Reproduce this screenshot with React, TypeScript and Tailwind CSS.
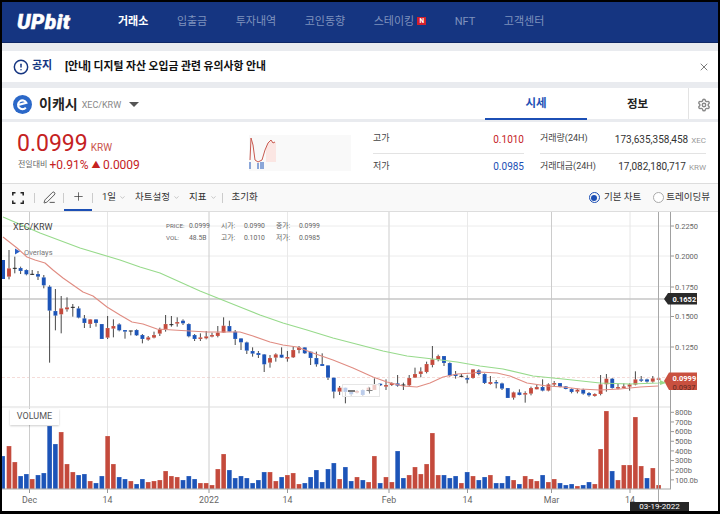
import { ChevronDown, CircleAlert, PenLine, Plus, Settings, X } from 'lucide-react'

const BLUE = '#1c54b8'
const RED = '#c44a3c'

type Candle = ['b' | 'r' | 'd', number, number, number, number]

// body top, body bottom, wick top, wick bottom, read off 3x crops (y = base + v / 3)
const candlesA: Candle[] = [
  ['r', 25, 50, -30, 58], ['d', 25, 25, -10, 40], ['b', 24, 33, 20, 42], ['b', 30, 43, 28, 46], ['d', 43, 43, 30, 45],
  ['b', 42, 50, 33, 60], ['b', 52, 76, 45, 85], ['b', 80, 152, 76, 308], ['b', 153, 167, 87, 211], ['r', 145, 163, 108, 220],
  ['r', 142, 148, 112, 155], ['d', 142, 142, 132, 170], ['b', 145, 173, 139, 175], ['b', 175, 189, 165, 204], ['r', 178, 192, 178, 204],
  ['b', 178, 189, 178, 200], ['b', 192, 237, 192, 237], ['r', 204, 233, 168, 237], ['r', 198, 206, 178, 232], ['b', 193, 211, 190, 214],
  ['b', 210, 215, 210, 236], ['d', 213, 213, 212, 226], ['b', 210, 226, 208, 228], ['b', 225, 237, 222, 250], ['r', 232, 239, 228, 242],
  ['r', 225, 233, 215, 235], ['r', 208, 221, 203, 228], ['r', 192, 207, 165, 215], ['d', 194, 194, 168, 200], ['r', 186, 191, 172, 200],
  ['b', 182, 190, 178, 195], ['b', 192, 229, 190, 232], ['b', 225, 237, 222, 243], ['r', 232, 237, 220, 243], ['r', 229, 235, 213, 238],
  ['r', 225, 230, 218, 232], ['r', 218, 228, 198, 232], ['r', 197, 218, 172, 218], ['b', 198, 215, 182, 215], ['b', 215, 237, 210, 255],
]
const candlesB: Candle[] = [
  ['b', 145, 157, 145, 180], ['b', 157, 182, 155, 192], ['b', 183, 191, 172, 200], ['b', 189, 195, 183, 204], ['b', 193, 223, 192, 246],
  ['r', 204, 218, 195, 233], ['r', 193, 203, 190, 215], ['b', 194, 203, 172, 204], ['r', 201, 206, 183, 215], ['r', 180, 202, 170, 204],
  ['r', 172, 180, 168, 190], ['b', 172, 190, 172, 192], ['b', 185, 204, 185, 225], ['b', 204, 223, 185, 230], ['b', 222, 228, 190, 228],
  ['b', 226, 263, 226, 270], ['b', 263, 305, 263, 325], ['r', 293, 305, 288, 315], ['b', 293, 306, 293, 340], ['b', 300, 313, 300, 318],
  ['r', 303, 308, 300, 310], ['b', 300, 315, 298, 318], ['r', 293, 300, 290, 305], ['r', 283, 300, 265, 300], ['b', 281, 286, 281, 288],
  ['r', 285, 290, 268, 300], ['r', 279, 285, 277, 288], ['b', 280, 287, 255, 290], ['d', 285, 285, 278, 300], ['r', 264, 286, 255, 290],
  ['r', 252, 263, 233, 264], ['r', 244, 252, 232, 262], ['r', 222, 246, 215, 250], ['r', 208, 225, 168, 232], ['r', 198, 208, 194, 214],
  ['b', 198, 219, 198, 228], ['b', 219, 257, 217, 260], ['b', 252, 258, 243, 266], ['d', 259, 259, 252, 262], ['b', 264, 269, 256, 280],
  ['r', 238, 264, 238, 266], ['b', 241, 252, 238, 256],
  ['b', 252, 279, 250, 282], ['r', 276, 282, 258, 284], ['b', 276, 280, 270, 295], ['b', 280, 296, 278, 300], ['b', 294, 324, 294, 324],
  ['r', 307, 323, 305, 329], ['b', 307, 315, 298, 316], ['r', 309, 314, 304, 338], ['r', 294, 311, 290, 316], ['r', 291, 298, 284, 298],
  ['b', 291, 302, 268, 304], ['r', 283, 302, 280, 304], ['r', 279, 284, 273, 290], ['b', 279, 291, 279, 292], ['b', 289, 297, 288, 298],
  ['b', 297, 306, 295, 310], ['r', 299, 305, 296, 310], ['b', 299, 311, 296, 314], ['b', 309, 316, 306, 320], ['r', 312, 318, 310, 320],
  ['r', 283, 312, 255, 316], ['r', 266, 283, 252, 305], ['b', 266, 294, 264, 296], ['r', 291, 296, 282, 298], ['r', 289, 294, 280, 295],
  ['r', 283, 290, 280, 302], ['r', 268, 284, 244, 286], ['b', 268, 272, 258, 276], ['b', 268, 275, 266, 278], ['r', 265, 275, 258, 278],
  ['r', 265, 269, 263, 272],
]

const candles = [
  ...candlesA.map((c) => ({ c, base: 260 })),
  ...candlesB.map((c) => ({ c, base: 290 })),
]

// k = -1 first, height in px, + is red and - is blue
const volumes = [
  -33, 43, 27, -13, -15, 10, -14, -16, -63, -45, 57, 25, 17, -14, -15, 8, -6, -13, 53, 25, -12, -10, 8, -5, -10, 7, 8, 9, 18, 13, 12,
  -9, -13, -10, 6, 6, 4, 20, 35, -19, -11,
  -13, -11, -6, -9, -17, 17, 8, -12, 14, 16, 5, -6, -12, -19, -7, -20, -26, 10, -22, -8, 12, -9, 7, 33, -6, 12, 7, -38, -11, 14, 22,
  15, 25, 56, 14, -14, -11, -13, 6, -17, 13, -9,
  -12, 14, -6, -6, -13, 9, -5, 13, 10, 8, -14, 7, 10, -6, -4, -5, 3, -4, -7, 5, 40, 78, -18, 9, 24, 24, 72, 23, -11, 21, 4,
]

const redLine = '3,237 17,248 27,257 35,260 45,263 53,270 63,278 73,285 83,292 93,296 107,307 120,315 132,322 143,324 157,329 173,330 190,331 207,332 227,332 240,332 253,336 270,342 283,345 297,347 313,353 333,360 353,368 373,377 387,382 403,386 417,387 430,383 443,377 457,374 473,373 480,372 497,373 510,376 527,383 547,386 563,387 580,389 600,390 620,389 640,387 658,386'
const greenLine = '3,217 40,233 80,248 120,260 140,267 160,273 180,282 200,291 220,299 240,307 260,315 283,323 307,330 333,338 360,345 383,351 407,356 433,359 457,362 480,366 503,369 533,376 563,379 600,383 630,384 658,383 667,382'

const xOf = (k: number) => 9 + 5.8 * k

const vGrid = [
  { x: 29.5, c: '#cccccc', w: 1 },
  { x: 107.5, c: '#e6e6e6', w: 1 },
  { x: 209, c: '#cccccc', w: 1 },
  { x: 287.5, c: '#e9e9e9', w: 1 },
  { x: 389, c: '#dedede', w: 1.5 },
  { x: 467.5, c: '#e9e9e9', w: 1 },
  { x: 551.5, c: '#cccccc', w: 1 },
  { x: 630, c: '#e6e6e6', w: 1 },
]
const hGrid = [226, 256, 286.5, 317, 347, 377.5]
const priceLabels = [
  ['0.2250', 226],
  ['0.2000', 256],
  ['0.1750', 287],
  ['0.1500', 316.5],
  ['0.1250', 347],
] as const
const volLabels = ['800b', '700b', '600b', '500b', '400b', '300b', '200b', '100.0b']
const dates = [
  ['Dec', 29.5],
  ['14', 107.5],
  ['2022', 209],
  ['14', 287.5],
  ['Feb', 389],
  ['14', 467.5],
  ['Mar', 551.5],
  ['14', 630],
] as const
const info = [
  ['PRICE:', 166, 225],
  ['0.0999', 189, 225],
  ['시가:', 221, 225],
  ['0.0990', 244, 225],
  ['종가:', 276, 225],
  ['0.0999', 299, 225],
  ['VOL:', 166, 237],
  ['48.5B', 189, 237],
  ['고가:', 221, 237],
  ['0.1010', 244, 237],
  ['저가:', 276, 237],
  ['0.0985', 299, 237],
] as const

const navItems = ['입출금', '투자내역', '코인동향']

function Chart() {
  return (
    <svg viewBox="2 212 716 299" className="absolute inset-0 w-full h-full">
      {hGrid.map((y) => (
        <line key={y} x1={2} x2={670} y1={y} y2={y} stroke={y === 377.5 ? '#f5dcd9' : '#ececec'} strokeDasharray={y === 377.5 ? '3 2' : undefined} />
      ))}
      {vGrid.map((g) => (
        <line key={g.x} x1={g.x} x2={g.x} y1={212} y2={489} stroke={g.c} strokeWidth={g.w} />
      ))}
      <line x1={2} x2={666} y1={299} y2={299} stroke="#c6c6c6" strokeWidth={1.5} />
      <line x1={2} x2={671} y1={407} y2={407} stroke="#dddddd" />

      {volumes.map((v, i) => (
        <rect
          key={i}
          x={Math.max(xOf(i - 1) - 2.4, 2)}
          y={489 - Math.abs(v)}
          width={xOf(i - 1) - 2.4 < 2 ? 3 : 4.8}
          height={Math.abs(v)}
          fill={v > 0 ? RED : BLUE}
          stroke="#ffffff"
          strokeOpacity={0.35}
          strokeWidth={0.6}
        />
      ))}

      <rect x={2} y={260} width={3} height={19} fill={BLUE} />
      {candles.map(({ c, base }, k) => {
        const [kind, top, bot, wt, wb] = c
        const x = xOf(k)
        const y = (v: number) => base + v / 3
        return (
          <g key={k}>
            <line x1={x} x2={x} y1={y(wt)} y2={y(wb)} stroke="#333333" strokeWidth={0.9} />
            {kind === 'd' ? (
              <line x1={x - 2} x2={x + 2} y1={y(top)} y2={y(top)} stroke="#222222" />
            ) : (
              <rect
                x={x - 2}
                y={y(top)}
                width={4}
                height={Math.max(y(bot) - y(top), 1.5)}
                fill={kind === 'r' ? RED : BLUE}
                stroke="#ffffff"
                strokeOpacity={0.3}
                strokeWidth={0.5}
              />
            )}
          </g>
        )
      })}

      <polyline points={redLine} fill="none" stroke="#e08c82" strokeWidth={1.1} strokeLinejoin="round" />
      <polyline points={greenLine} fill="none" stroke="#97da8b" strokeWidth={1.1} strokeLinejoin="round" />

      <line x1={658.5} x2={658.5} y1={212} y2={503} stroke="#a8a8a8" />
      <line x1={670.5} x2={670.5} y1={212} y2={489} stroke="#a0a0a0" />
      <line x1={2} x2={671} y1={489} y2={489} stroke="#a8a8a8" />

      <g fontSize={7.5} fill="#666666">
        {priceLabels.map(([t, y]) => (
          <g key={t}>
            <line x1={671} x2={674} y1={y} y2={y} stroke="#999999" />
            <text x={675} y={y + 2.7}>{t}</text>
          </g>
        ))}
        {volLabels.map((t, i) => (
          <g key={t}>
            <line x1={671} x2={674} y1={412.3 + i * 9.65} y2={412.3 + i * 9.65} stroke="#999999" />
            <text x={675} y={415 + i * 9.65}>{t}</text>
          </g>
        ))}
      </g>

      {dates.map(([t, x]) => (
        <g key={x}>
          <line x1={x} x2={x} y1={489} y2={493} stroke="#999999" />
          <text x={x} y={502.5} textAnchor="middle" fontSize={8.8} fill="#666666">{t}</text>
        </g>
      ))}

      <text x={13} y={229.5} fontSize={9} fill="#444444">XEC/KRW</text>
      <polygon points="15,248.5 20,251.5 15,254.5" fill="#2a5fc4" />
      <text x={24} y={254.5} fontSize={7.5} fill="#777777">Overlays</text>
      {info.map(([t, x, y]) => (
        <text key={`${t}${x}${y}`} x={x} y={y + 2.5} fontSize={x === 166 ? 6.2 : 6.8} fill="#666666">{t}</text>
      ))}

      <polygon points="664,299 668,293 697,293 697,304.5 668,304.5" fill="#2a2a2a" />
      <text x={672.5} y={301.8} fontSize={7.5} fontWeight={700} fill="#ffffff">0.1652</text>

      <polygon points="664,381 669,372.5 697,372.5 697,390 669,390" fill="#c9503f" />
      <text x={672.5} y={381} fontSize={7.5} fontWeight={700} fill="#ffffff">0.0999</text>
      <text x={672.5} y={389.5} fontSize={7.5} fill="#5e2a22">0.0937</text>
      <polygon points="660,380 666,383 660,385" fill="#97da8b" />
    </svg>
  )
}

function Menu({ label }: { label: string }) {
  return (
    <div className="flex items-center gap-[3px] text-[9.5px] text-[#333]">
      <span>{label}</span>
      <ChevronDown className="w-[7px] h-[7px] text-[#888]" strokeWidth={1.5} />
    </div>
  )
}

function StatRow({ label, value, unit, border }: { label: string; value: string; unit?: string; border?: boolean }) {
  return (
    <div className={`flex items-center justify-between ${border ? 'h-[29px] border-b border-[#e3e3e3]' : 'h-[25px]'}`}>
      <span className="text-[9px] text-[#444]">{label}</span>
      <span className="text-[10px] text-[#333] flex items-baseline gap-[3px]">
        {value}
        <span className="text-[8px] text-[#9a9a9a]">{unit}</span>
      </span>
    </div>
  )
}

export default function App() {
  return (
    <div className="w-[720px] h-[514px] bg-black pt-[2px] px-[2px] pb-[3px] flex flex-col overflow-hidden font-[family-name:Roboto,'Noto_Sans_CJK_KR',sans-serif]">
      <header className="h-[41px] shrink-0 bg-[#153581] border-b border-[#0e2765] flex items-center pl-[15px]">
        <span className="w-[101px] text-white text-[21px] leading-none italic font-black tracking-[0.5px] [-webkit-text-stroke:0.5px_white]">UPbit</span>
        <nav className="flex items-center gap-[28.5px] text-[11px] text-[#7f92bd]">
          <span className="text-white font-bold">거래소</span>
          {navItems.map((item) => (
            <span key={item}>{item}</span>
          ))}
          <span className="flex items-center gap-[3px]">
            스테이킹
            <span className="w-[9px] h-[8px] mb-[3px] bg-[#d3202c] text-white text-[6.5px] font-bold leading-[8px] text-center">N</span>
          </span>
          <span>NFT</span>
          <span>고객센터</span>
        </nav>
      </header>

      <div className="h-[8px] shrink-0 bg-[#e9ebef]" />

      <div className="h-[31px] shrink-0 bg-white flex items-center pl-[11px] pr-[8px]">
        <CircleAlert className="w-[16px] h-[16px] text-[#153581]" strokeWidth={2.2} />
        <span className="ml-[3px] w-[33px] text-[11px] font-bold text-[#153581]">공지</span>
        <span className="mt-px text-[10.8px] font-bold text-[#111]">[안내] 디지털 자산 오입금 관련 유의사항 안내</span>
        <X className="ml-auto w-[12px] h-[12px] text-[#444]" strokeWidth={1.4} />
      </div>

      <div className="h-[6px] shrink-0 bg-[#e9ebef]" />

      <div className="h-[32px] shrink-0 bg-white flex border-b border-[#e9ebef]">
        <div className="w-[483px] pt-[2px] flex items-center pl-[11px]">
          <svg viewBox="0 0 20 20" className="w-[19px] h-[19px]">
            <circle cx="10" cy="10" r="10" fill="#2b68c8" />
            <path d="M5.5 10.5 L14 8.2 A4.6 4.6 0 1 0 13.5 13.2" fill="none" stroke="#ffffff" strokeWidth="2.2" />
          </svg>
          <span className="ml-[7px] text-[14px] font-bold text-[#222]">이캐시</span>
          <span className="ml-[4px] mt-[3px] text-[9px] text-[#888]">XEC/KRW</span>
          <span className="ml-[8px] w-0 h-0 border-x-[5px] border-x-transparent border-t-[5px] border-t-[#555]" />
        </div>
        <div className="w-[102px] pt-[2px] -mb-px flex items-center justify-center border-b-2 border-[#1c4fb5] text-[11.5px] font-bold text-[#1c4fb5]">시세</div>
        <div className="w-[101px] pt-[2px] flex items-center justify-center text-[11.5px] font-bold text-[#222]">정보</div>
        <div className="w-[30px] pt-[2px] border-l border-[#e3e3e3] flex items-center justify-center">
          <Settings className="w-[14px] h-[14px] text-[#888]" strokeWidth={2.4} />
        </div>
      </div>

      <div className="h-[2px] shrink-0 bg-[#e9ebef]" />

      <div className="h-[62px] shrink-0 bg-white border-b border-[#dddddd] flex">
        <div className="w-[247px] pl-[15px] pt-[8px]">
          <div className="flex items-baseline text-[#c5221f]">
            <span className="text-[23px] leading-[28px]">0.0999</span>
            <span className="ml-[3px] text-[10px] text-[#c9534a]">KRW</span>
          </div>
          <div className="flex items-center text-[#c5221f] text-[12px] leading-[14px]">
            <span className="ml-px text-[8px] text-[#666]">전일대비</span>
            <span className="ml-[2px]">+0.91%</span>
            <span className="ml-[3px] text-[9px]">▲</span>
            <span className="ml-[2.5px]">0.0009</span>
          </div>
        </div>
        <svg viewBox="0 0 102 36" className="mt-[13px] w-[102px] h-[36px] bg-[#f9f9f9]">
          <polygon points="17,12 19,8 22,5 24,8 27,7 27,27 17,27" fill="#fbe6e3" />
          <polyline points="1,25 2,3 4,10 6,25 9,27 13,25 16,15 19,8 22,5 24,8 26,7" fill="none" stroke="#c85a50" strokeWidth={1} />
          <path d="M1 27v7M9 28v6M12 27v7M14 27v7" stroke={BLUE} strokeWidth={1} />
        </svg>
        <div className="ml-[22px] mt-[3px] w-[151px]">
          <div className="flex items-center justify-between h-[29px] border-b border-[#e3e3e3]">
            <span className="text-[9px] text-[#444]">고가</span>
            <span className="text-[10px] text-[#c5221f]">0.1010</span>
          </div>
          <div className="flex items-center justify-between h-[25px]">
            <span className="text-[9px] text-[#444]">저가</span>
            <span className="text-[10px] text-[#1c4fb5]">0.0985</span>
          </div>
        </div>
        <div className="ml-[16px] mt-[3px] w-[166px]">
          <StatRow label="거래량(24H)" value="173,635,358,458" unit="XEC" border />
          <StatRow label="거래대금(24H)" value="17,082,180,717" unit="KRW" />
        </div>
      </div>

      <div className="h-[28px] shrink-0 bg-[#f9f9f9] border-b border-[#dddddd] flex items-center">
        <div className="w-[32px] flex justify-center">
          <svg viewBox="0 0 12 12" className="w-[12px] h-[12px]" fill="none" stroke="#222" strokeWidth="1.5">
            <path d="M0.8 3.5V0.8H3.5M8.5 0.8H11.2V3.5M11.2 8.5V11.2H8.5M3.5 11.2H0.8V8.5" />
          </svg>
        </div>
        <div className="w-px h-[10px] bg-[#ccc]" />
        <div className="w-[28px] flex justify-center">
          <PenLine className="w-[13px] h-[13px] text-[#333]" strokeWidth={1.5} />
        </div>
        <div className="w-px h-[10px] bg-[#ccc]" />
        <div className="w-[28px] h-full flex items-center justify-center border-b-2 border-[#1c4fb5]">
          <Plus className="w-[13px] h-[13px] text-[#333]" strokeWidth={1.3} />
        </div>
        <div className="w-px h-[10px] bg-[#ccc]" />
        <div className="ml-[9px] flex items-center gap-[9px]">
          <Menu label="1일" />
          <Menu label="차트설정" />
          <Menu label="지표" />
        </div>
        <div className="ml-[5px] w-px h-[10px] bg-[#ccc]" />
        <span className="ml-[9px] text-[9.5px] text-[#333]">초기화</span>
        <div className="ml-auto pr-[8px] flex items-center text-[9.5px] text-[#333]">
          <span className="w-[11px] h-[11px] rounded-full border border-[#1c4fb5] flex items-center justify-center">
            <span className="w-[6px] h-[6px] rounded-full bg-[#1c4fb5]" />
          </span>
          <span className="ml-[4px]">기본 차트</span>
          <span className="ml-[12px] w-[11px] h-[11px] rounded-full border border-[#aaa] bg-white" />
          <span className="ml-[2px]">트레이딩뷰</span>
        </div>
      </div>

      <div className="relative flex-1 bg-white overflow-hidden">
        <Chart />
        <div className="absolute left-[340px] top-[172px] w-[38px] h-[13px] bg-white/70 border border-[#e6e6e6] flex items-center justify-around text-[#777]">
          <span className="w-[7px] h-[2px] bg-[#777]" />
          <Plus className="w-[9px] h-[9px]" strokeWidth={2.4} />
        </div>
        <div className="absolute left-[8px] top-[197px] w-[49px] h-[16px] bg-white shadow-[0_1px_2px_rgba(0,0,0,0.2)] flex items-center justify-center text-[9px] text-[#555]">
          VOLUME
        </div>
        <div className="absolute left-[628px] top-[290px] w-[59px] h-[9px] bg-[#262626] flex items-center justify-center text-[8px] text-white">
          03-19-2022
        </div>
      </div>
    </div>
  )
}
